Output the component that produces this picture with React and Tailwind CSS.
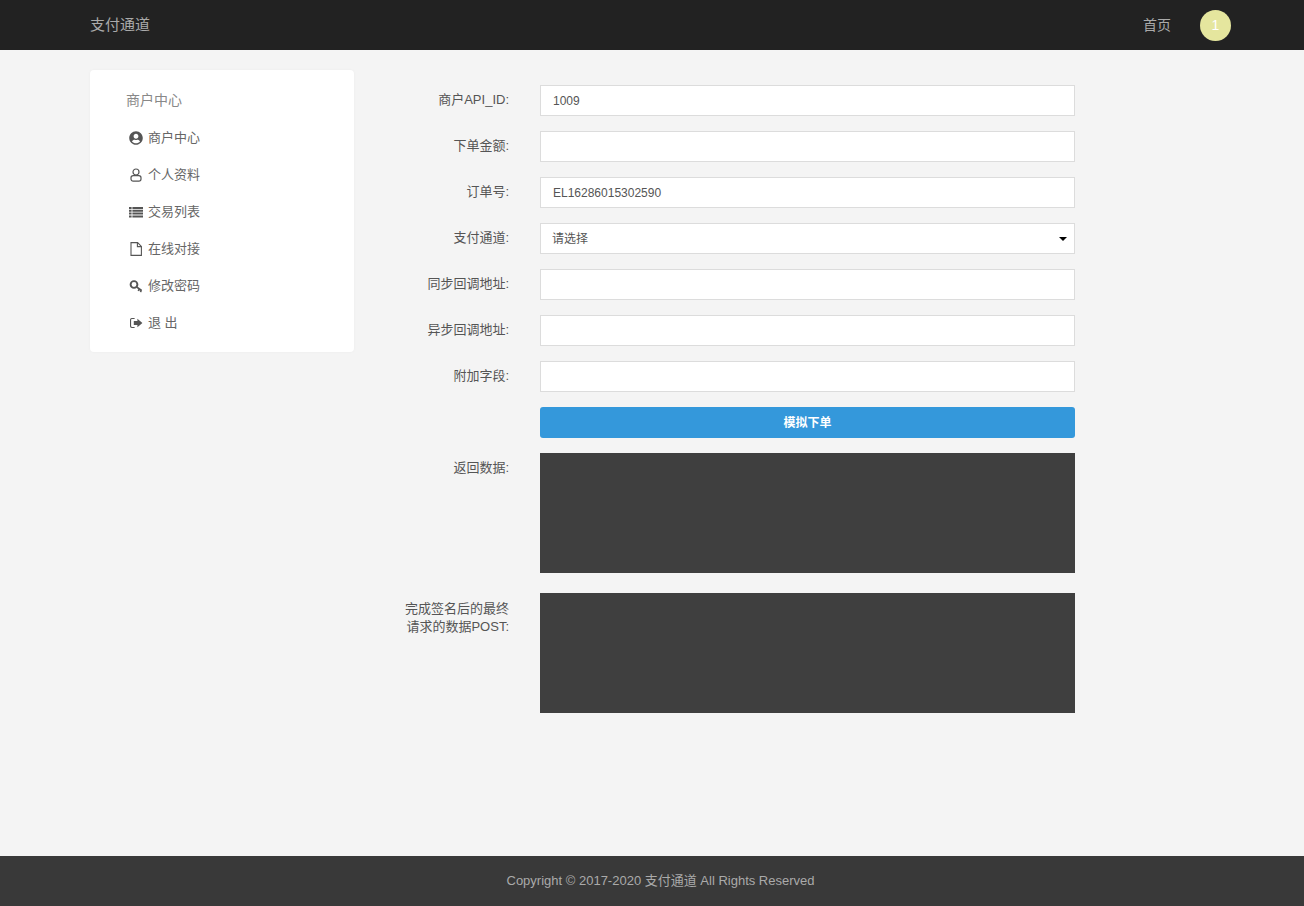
import React from 'react';
import { FaUserCircle } from 'react-icons/fa';

const UserIcon = ({ className }) => (
  <svg viewBox="0 0 12 14" className={className} fill="none" stroke="currentColor" strokeWidth="1.2">
    <circle cx="6" cy="4" r="3" />
    <rect x="1" y="7.6" width="10" height="5.6" rx="2.2" />
  </svg>
);

const ListIcon = ({ className }) => (
  <svg viewBox="0 0 14 14" className={className} fill="currentColor">
    <path d="M0 2h2.6v2H0zM3.4 2H14v2H3.4zM0 4.8h2.6v2H0zM3.4 4.8H14v2H3.4zM0 7.6h2.6v2H0zM3.4 7.6H14v2H3.4zM0 10.4h2.6v2H0zM3.4 10.4H14v2H3.4z" />
  </svg>
);

const FileIcon = ({ className }) => (
  <svg viewBox="0 0 12 14" className={className} fill="none" stroke="currentColor" strokeWidth="1.1">
    <path d="M1 .6h6.6L11.4 4.4v9H1z" />
    <path d="M7.4.8v3.8h3.8" />
  </svg>
);

const KeyIcon = ({ className }) => (
  <svg viewBox="0 0 14 14" className={className} fill="none" stroke="currentColor">
    <circle cx="5" cy="5.5" r="3.4" strokeWidth="1.9" />
    <path d="M7.6 8 12.6 11.4M10.4 9.8l-1.2 2M12.4 11.2l-1 1.8" strokeWidth="1.6" />
  </svg>
);

const SignOutIcon = ({ className }) => (
  <svg viewBox="0 0 14 14" className={className} fill="currentColor">
    <path d="M5.6 2H2.8A1.8 1.8 0 0 0 1 3.8v6.4A1.8 1.8 0 0 0 2.8 12h2.8v-1.1H2.9a.8.8 0 0 1-.8-.8V3.9a.8.8 0 0 1 .8-.8h2.7z" />
    <path d="M8.4 2.8 13.4 7l-5 4.2V9H4.8V5h3.6z" />
  </svg>
);

const menu = [
  { label: '商户中心', icon: <FaUserCircle className="w-[14px] h-[14px]" /> },
  { label: '个人资料', icon: <UserIcon className="w-[12px] h-[14px]" /> },
  { label: '交易列表', icon: <ListIcon className="w-[14px] h-[14px]" /> },
  { label: '在线对接', icon: <FileIcon className="w-[12px] h-[14px]" /> },
  { label: '修改密码', icon: <KeyIcon className="w-[14px] h-[14px]" /> },
  { label: '退 出', icon: <SignOutIcon className="w-[14px] h-[14px]" /> },
];

const Row = ({ label, children }) => (
  <div className="flex">
    <label className="w-[155px] mr-[31px] text-right text-[13px] leading-[30px] text-[#555]">{label}</label>
    <div className="w-[535px]">{children}</div>
  </div>
);

const Input = ({ value }) => (
  <input
    type="text"
    defaultValue={value}
    className="block w-full h-[31px] px-3 bg-white border border-[#dcdcdc] text-xs text-[#555] outline-none"
  />
);

export default function App() {
  return (
    <div className="min-h-screen flex flex-col bg-[#f4f4f4] font-['Liberation_Sans','Noto_Sans_CJK_SC',sans-serif]">
      <header className="h-[50px] shrink-0 flex items-center justify-between pl-[90px] pr-[73px] bg-[#222]">
        <a className="text-[15px] text-[#aaa]">支付通道</a>
        <div className="flex items-center gap-[29px]">
          <a className="text-sm text-[#aaa]">首页</a>
          <div className="w-[31px] h-[31px] rounded-full bg-[#e5e69e] flex items-center justify-center text-sm text-white">1</div>
        </div>
      </header>

      <main className="flex-1 flex items-start pl-[90px] pt-5">
        <aside className="w-[264px] h-[282px] shrink-0 bg-white rounded pt-[21px] pl-9 shadow-[0_0_3px_rgba(0,0,0,0.04)]">
          <h3 className="text-sm leading-[18px] text-[#888]">商户中心</h3>
          <ul className="mt-[19px] flex flex-col gap-[18px]">
            {menu.map((item) => (
              <li key={item.label} className="flex items-center h-[19px] text-[13px] text-[#666]">
                <span className="w-[14px] ml-[3px] mr-[5px] flex justify-center text-[#555]">{item.icon}</span>
                {item.label}
              </li>
            ))}
          </ul>
        </aside>

        <form className="pt-[15px] flex flex-col gap-[15px]">
          <Row label="商户API_ID:"><Input value="1009" /></Row>
          <Row label="下单金额:"><Input value="" /></Row>
          <Row label="订单号:"><Input value="EL16286015302590" /></Row>
          <Row label="支付通道:">
            <div className="relative">
              <select className="block w-full h-[31px] px-[11px] appearance-none bg-white border border-[#dcdcdc] rounded-none text-xs text-[#555] outline-none">
                <option>请选择</option>
              </select>
              <span className="absolute right-[8px] top-[14px] w-0 h-0 border-x-[4px] border-x-transparent border-t-[4px] border-t-black" />
            </div>
          </Row>
          <Row label="同步回调地址:"><Input value="" /></Row>
          <Row label="异步回调地址:"><Input value="" /></Row>
          <Row label="附加字段:"><Input value="" /></Row>
          <Row label="">
            <button type="button" className="block w-full h-[31px] rounded-[3px] bg-[#3498db] text-xs font-bold text-white">模拟下单</button>
          </Row>
          <Row label="返回数据:">
            <textarea className="block w-full h-[120px] bg-[#3f3f3f] resize-none outline-none" />
          </Row>
          <div className="flex mt-[5px]">
            <label className="w-[155px] mr-[31px] pt-[7px] text-right text-[13px] leading-[18px] text-[#555]">
              完成签名后的最终<br />请求的数据POST:
            </label>
            <textarea className="block w-[535px] h-[120px] bg-[#3f3f3f] resize-none outline-none" />
          </div>
        </form>
      </main>

      <footer className="h-[50px] shrink-0 flex items-center justify-center pl-[17px] bg-[#393939] text-[13px] text-[#aaa]">
        Copyright © 2017-2020 支付通道 All Rights Reserved
      </footer>
    </div>
  );
}
